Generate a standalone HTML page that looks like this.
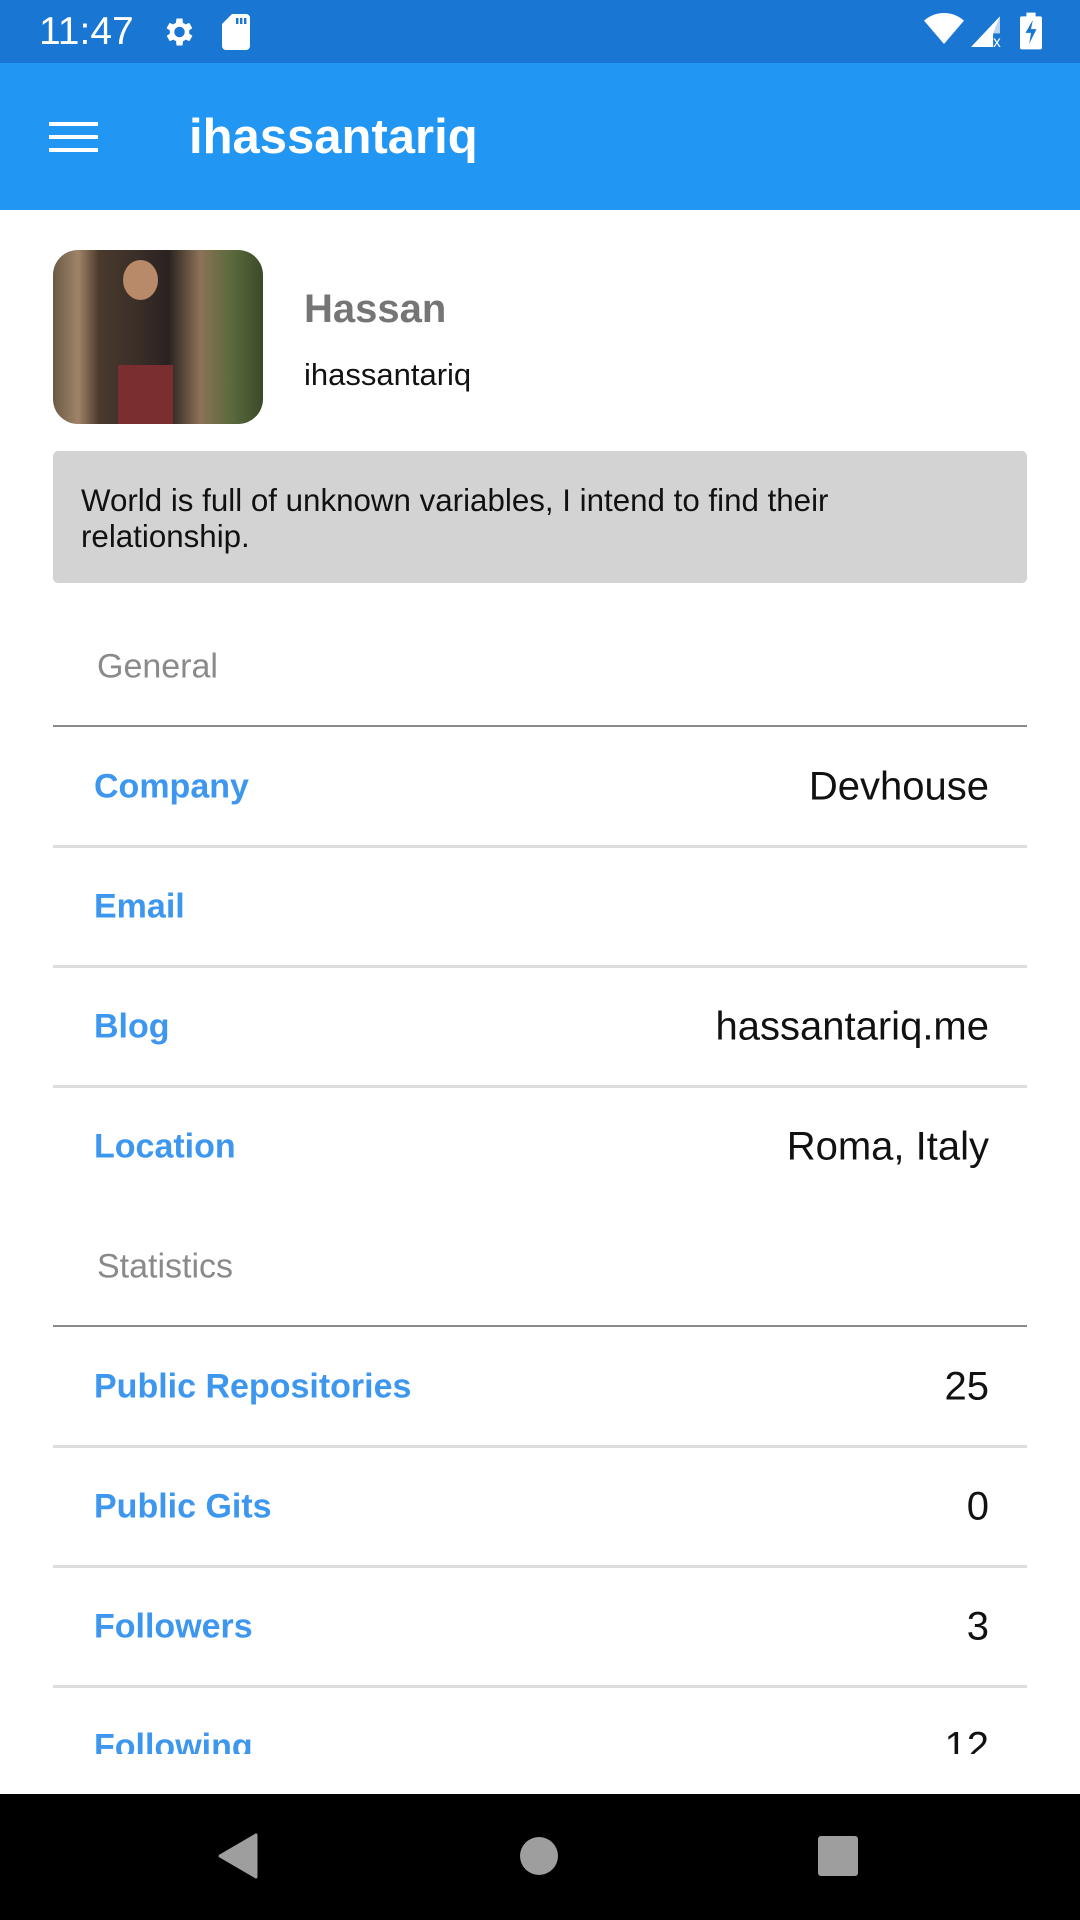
<!DOCTYPE html>
<html><head><meta charset="utf-8"><style>
*{margin:0;padding:0;box-sizing:border-box}
body{width:1080px;height:1920px;overflow:hidden;background:#fff;font-family:"Liberation Sans",sans-serif;position:relative}
.abs{position:absolute}
.lbl{position:absolute;left:94px;font-weight:700;font-size:34px;color:#3d97ef;transform:translateY(-50%);white-space:nowrap}
.val{position:absolute;right:91px;font-size:40px;color:#111;transform:translateY(-50%);white-space:nowrap}
.sep{position:absolute;left:53px;width:974px;height:3px;background:#dddddd}
.hdr{position:absolute;left:97px;font-size:34px;color:#8a8a8a;transform:translateY(-50%)}
.hline{position:absolute;left:53px;width:974px;height:2px;background:#8c8c8c}
</style></head><body>
<div class="abs" style="left:0;top:0;width:1080px;height:63px;background:#1976D2"></div>
<div class="abs" style="left:39px;top:10px;font-size:39px;color:#fff">11:47</div>
<svg class="abs" style="left:160px;top:14px" width="36" height="36" viewBox="0 0 24 24"><path fill="#fff" d="M19.4 13a7.5 7.5 0 000-2l2.1-1.6-2-3.5-2.5 1a7 7 0 00-1.7-1L15 3h-4l-.4 2.9a7 7 0 00-1.7 1l-2.5-1-2 3.5L6.6 11a7.5 7.5 0 000 2l-2.1 1.6 2 3.5 2.5-1a7 7 0 001.7 1L11 21h4l.4-2.9a7 7 0 001.7-1l2.5 1 2-3.5zM13 15.5a3.5 3.5 0 110-7 3.5 3.5 0 010 7z"/></svg>
<svg class="abs" style="left:222px;top:14px" width="28" height="36" viewBox="0 0 14 18"><path fill="#fff" d="M5 0h7a2 2 0 012 2v14a2 2 0 01-2 2H2a2 2 0 01-2-2V5zM7 2v3h1.2V2zM9 2v3h1.2V2zM11 2v3h1.2V2z"/></svg>
<svg class="abs" style="left:924px;top:12px" width="40" height="34" viewBox="0 0 24 20"><path fill="#fff" d="M12 19L0 5a18 18 0 0124 0z"/></svg>
<svg class="abs" style="left:970px;top:13px" width="36" height="34" viewBox="0 0 20 20"><path fill="#fff" d="M0 20L17 2v10h-4v8z"/><path fill="#8cb8e8" d="M13 12h4V2z" opacity=".6"/><text x="13" y="20" font-size="9" fill="#fff" font-family="Liberation Sans">x</text></svg>
<svg class="abs" style="left:1020px;top:12px" width="22" height="38" viewBox="0 0 12 20"><path fill="#fff" d="M3.5 0h5v2H11a1 1 0 011 1v16a1 1 0 01-1 1H1a1 1 0 01-1-1V3a1 1 0 011-1h2.5z"/><path fill="#1976D2" d="M7 4L3 11h3l-1 6 4-8H6z"/></svg>
<div class="abs" style="left:0;top:63px;width:1080px;height:147px;background:#2196F3"></div>
<div class="abs" style="left:49px;top:122px;width:49px;height:4px;background:#fff"></div>
<div class="abs" style="left:49px;top:135px;width:49px;height:4px;background:#fff"></div>
<div class="abs" style="left:49px;top:148px;width:49px;height:4px;background:#fff"></div>
<div class="abs" style="left:189px;top:109px;font-size:49px;color:#fff;font-weight:700">ihassantariq</div>
<div class="abs" style="left:53px;top:250px;width:210px;height:174px;border-radius:25px;overflow:hidden;background:linear-gradient(90deg,#6b5a44 0%,#a08468 12%,#4a3a2c 22%,#3a2e28 40%,#2a2220 55%,#8c7258 70%,#5a6a3c 85%,#3b4a2a 100%)">
<div class="abs" style="left:65px;top:115px;width:55px;height:60px;background:#7a2e30"></div>
<div class="abs" style="left:70px;top:10px;width:35px;height:40px;border-radius:50%;background:#b88a6a"></div>
</div>
<div class="abs" style="left:304px;top:287px;font-size:40px;font-weight:700;color:#757575">Hassan</div>
<div class="abs" style="left:304px;top:357px;font-size:31px;color:#111">ihassantariq</div>
<div class="abs" style="left:53px;top:451px;width:974px;height:132px;background:#d3d3d3;border-radius:5px"></div>
<div class="abs" style="left:81px;top:483px;width:900px;font-size:31.3px;line-height:36px;color:#111">World is full of unknown variables, I intend to find their relationship.</div>
<div class="hdr" style="top:667px">General</div>
<div class="hline" style="top:725px"></div>
<div class="lbl" style="top:787px">Company</div><div class="val" style="top:787px">Devhouse</div>
<div class="sep" style="top:845px"></div>
<div class="lbl" style="top:907px">Email</div>
<div class="sep" style="top:965px"></div>
<div class="lbl" style="top:1027px">Blog</div><div class="val" style="top:1027px">hassantariq.me</div>
<div class="sep" style="top:1085px"></div>
<div class="lbl" style="top:1147px">Location</div><div class="val" style="top:1147px">Roma, Italy</div>
<div class="hdr" style="top:1267px">Statistics</div>
<div class="hline" style="top:1325px"></div>
<div class="lbl" style="top:1387px">Public Repositories</div><div class="val" style="top:1387px">25</div>
<div class="sep" style="top:1445px"></div>
<div class="lbl" style="top:1507px">Public Gits</div><div class="val" style="top:1507px">0</div>
<div class="sep" style="top:1565px"></div>
<div class="lbl" style="top:1627px">Followers</div><div class="val" style="top:1627px">3</div>
<div class="sep" style="top:1685px"></div>
<div class="abs" style="left:0;top:1700px;width:1080px;height:54px;overflow:hidden">
<div class="lbl" style="top:47px">Following</div><div class="val" style="top:47px">12</div>
</div>
<div class="abs" style="left:0;top:1794px;width:1080px;height:126px;background:#000"></div>
<svg class="abs" style="left:218px;top:1833px" width="40" height="46" viewBox="0 0 40 46"><path fill="#9e9e9e" d="M38 2v42L2 23z" stroke="#9e9e9e" stroke-width="3" stroke-linejoin="round"/></svg>
<div class="abs" style="left:520px;top:1837px;width:38px;height:38px;border-radius:50%;background:#9e9e9e"></div>
<div class="abs" style="left:818px;top:1836px;width:40px;height:40px;border-radius:3px;background:#9e9e9e"></div>
</body></html>
